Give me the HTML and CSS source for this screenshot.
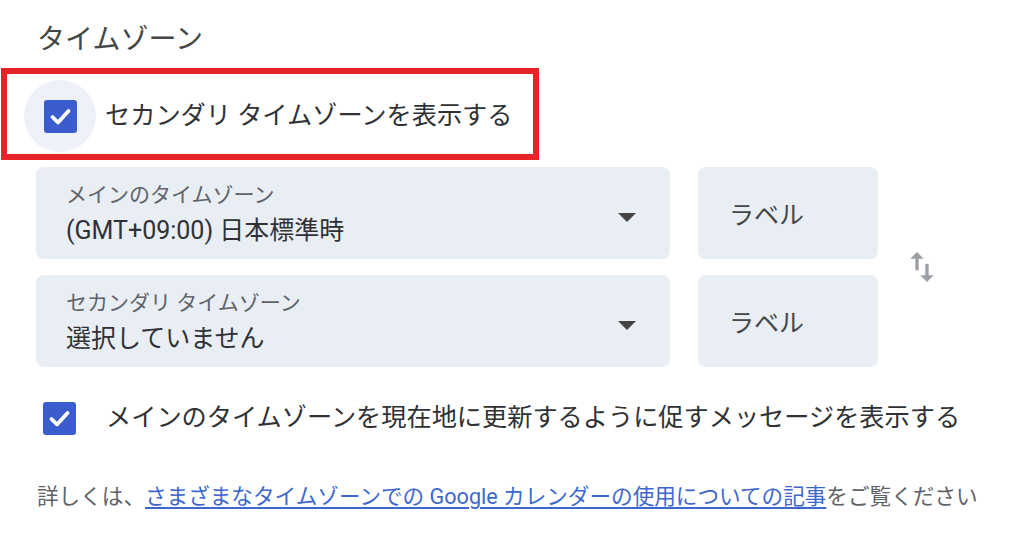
FILE: index.html
```html
<!DOCTYPE html>
<html lang="ja">
<head>
<meta charset="UTF-8">
<meta name="viewport" content="width=device-width, initial-scale=1.0">
<title>タイムゾーン</title>
<link rel="stylesheet" href="styles.css">
</head>
<body>

<div class="settings">
  <h2 class="heading">タイムゾーン</h2>

  <div class="highlight">
    <label class="check-row">
      <span class="check-wrap focused">
        <svg class="checkbox" width="33" height="33" viewBox="0 0 33 33">
          <rect x="0" y="0" width="33" height="33" rx="3" fill="#3b5ccc"/>
          <polyline points="8.5,17 14,22.5 24.5,11" fill="none" stroke="#fff" stroke-width="3.8" stroke-linecap="round" stroke-linejoin="round"/>
        </svg>
      </span>
      <span class="check-text">セカンダリ タイムゾーンを表示する</span>
    </label>
  </div>

  <div class="zones">
    <div class="select">
      <div class="select-text">
        <div class="select-label">メインのタイムゾーン</div>
        <div class="select-value">(GMT+09:00) 日本標準時</div>
      </div>
      <span class="arrow"></span>
    </div>
    <div class="tag">ラベル</div>

    <div class="swap">
      <svg width="40" height="40" viewBox="0 0 24 24">
        <path d="M16 17.01V10h-2v7.01h-3L15 21l4-3.99h-3zM9 3L5 6.99h3V14h2V6.99h3L9 3z" fill="#9aa0a6"/>
      </svg>
    </div>

    <div class="select">
      <div class="select-text">
        <div class="select-label">セカンダリ タイムゾーン</div>
        <div class="select-value">選択していません</div>
      </div>
      <span class="arrow"></span>
    </div>
    <div class="tag">ラベル</div>
  </div>

  <label class="check-row second">
    <span class="check-wrap">
      <svg class="checkbox" width="33" height="33" viewBox="0 0 33 33">
        <rect x="0" y="0" width="33" height="33" rx="3" fill="#3b5ccc"/>
        <polyline points="8.5,17 14,22.5 24.5,11" fill="none" stroke="#fff" stroke-width="3.8" stroke-linecap="round" stroke-linejoin="round"/>
      </svg>
    </span>
    <span class="check-text">メインのタイムゾーンを現在地に更新するように促すメッセージを表示する</span>
  </label>

  <p class="footer">詳しくは、<a href="#">さまざまなタイムゾーンでの Google カレンダーの使用についての記事</a>をご覧ください</p>
</div>

</body>
</html>
```

FILE: styles.css
```css
body {
  margin: 0;
  background-color: #fff;
  font-family: Roboto, "Noto Sans CJK JP", sans-serif;
  color: #3c4043;
}
.settings {
  padding-top: 20px;
}
.heading {
  margin: 0 0 0 37px;
  font-size: 28px;
  font-weight: 400;
  line-height: 40px;
  color: #444746;
}
.highlight {
  margin: 8px 0 0 1px;
  width: 538px;
  height: 92px;
  box-sizing: border-box;
  border: 6px solid #e5242a;
  display: flex;
  align-items: center;
  padding-top: 4px;
}
.check-row {
  display: flex;
  align-items: center;
  gap: 9px;
  padding-left: 17px;
  cursor: pointer;
}
.check-wrap {
  width: 72px;
  height: 72px;
  border-radius: 50%;
  display: flex;
  align-items: center;
  justify-content: center;
  flex-shrink: 0;
}
.check-wrap.focused {
  background-color: #eef0fa;
}
.checkbox {
  display: block;
}
.check-text {
  font-size: 25.2px;
  line-height: 36px;
  color: #303134;
}
.zones {
  margin: 7px 0 0 36px;
  display: grid;
  grid-template-columns: 634px 180px 40px;
  column-gap: 28px;
  row-gap: 16px;
}
.select {
  height: 92px;
  box-sizing: border-box;
  background-color: #e9edf4;
  border-radius: 8px;
  padding: 14px 34px 0 30px;
  display: flex;
  justify-content: space-between;
}
.select-label {
  font-size: 21px;
  line-height: 28px;
  color: #5f6368;
}
.select-value {
  margin-top: 4px;
  font-size: 25px;
  line-height: 36px;
  color: #303134;
}
.arrow {
  margin-top: 32px;
  width: 0;
  height: 0;
  border-left: 9px solid transparent;
  border-right: 9px solid transparent;
  border-top: 9px solid #444;
}
.tag {
  background-color: #e9edf4;
  border-radius: 8px;
  padding-left: 31px;
  display: flex;
  align-items: center;
  font-size: 25px;
  color: #444746;
}
.swap {
  grid-column: 3;
  grid-row: 1 / span 2;
  align-self: center;
  margin-left: -4px;
  height: 40px;
}
.swap svg {
  display: block;
}
.second {
  margin-top: 26px;
  padding-left: 24px;
  height: 50px;
}
.second .check-wrap {
  width: 33px;
  height: 33px;
  margin-left: 19px;
  margin-right: 21px;
}
.footer {
  margin: 38px 0 0 37px;
  font-size: 21.6px;
  line-height: 32px;
  color: #5f6368;
}
.footer a {
  color: #3d67cf;
  text-decoration: underline;
  text-underline-offset: 3px;
}
```
